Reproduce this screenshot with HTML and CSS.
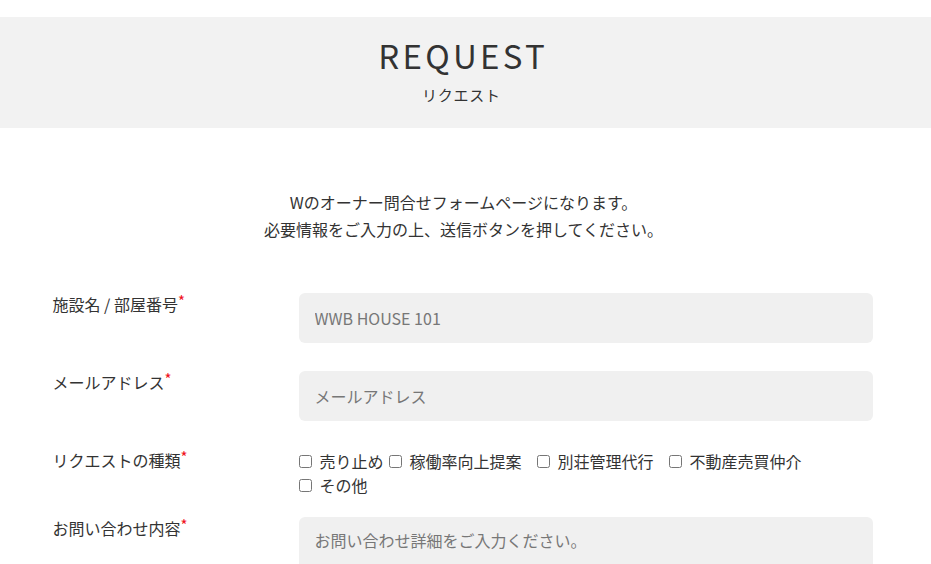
FILE: index.html
```html
<!DOCTYPE html>
<html lang="ja">
<head>
<meta charset="utf-8">
<title>REQUEST</title>
<link rel="stylesheet" href="styles.css">
</head>
<body>
<header class="hero">
  <h1 class="hero-title">REQUEST</h1>
  <p class="hero-sub">リクエスト</p>
</header>
<main class="content">
  <p class="intro">Wのオーナー問合せフォームページになります。<br>必要情報をご入力の上、送信ボタンを押してください。</p>
  <form class="form">
    <div class="row">
      <label class="label">施設名 / 部屋番号<span class="req">*</span></label>
      <input class="field" type="text" placeholder="WWB HOUSE 101">
    </div>
    <div class="row">
      <label class="label">メールアドレス<span class="req">*</span></label>
      <input class="field" type="text" placeholder="メールアドレス">
    </div>
    <div class="row row-check">
      <label class="label">リクエストの種類<span class="req">*</span></label>
      <div class="checks">
        <label class="check c1"><input type="checkbox"><span>売り止め</span></label>
        <label class="check c2"><input type="checkbox"><span>稼働率向上提案</span></label>
        <label class="check c3"><input type="checkbox"><span>別荘管理代行</span></label>
        <label class="check c4"><input type="checkbox"><span>不動産売買仲介</span></label>
        <label class="check c5"><input type="checkbox"><span>その他</span></label>
      </div>
    </div>
    <div class="row">
      <label class="label">お問い合わせ内容<span class="req">*</span></label>
      <textarea class="field area" placeholder="お問い合わせ詳細をご入力ください。"></textarea>
    </div>
  </form>
</main>
</body>
</html>
```
FILE: styles.css
```css
html, body {
  margin: 0;
  padding: 0;
  background: #fff;
}
body {
  font-family: "Noto Sans CJK JP", "Noto Sans", sans-serif;
  color: #333;
  padding-top: 17px;
}
.hero {
  background: #f2f2f2;
  height: 111px;
  box-sizing: border-box;
  text-align: center;
  padding-top: 16px;
  padding-right: 8px;
}
.hero-title {
  margin: 0;
  font-weight: 400;
  font-size: 33px;
  line-height: 44px;
  letter-spacing: 0.1em;
  padding-left: 0.1em;
  color: #333;
}
.hero-sub {
  margin: 8px 0 0;
  font-size: 15px;
  line-height: 20px;
  letter-spacing: 0.05em;
}
.content {
  width: 820px;
  margin: 0 auto;
  box-sizing: border-box;
  position: relative;
  left: -3px;
}
.intro {
  margin: 61px 0 0;
  text-align: center;
  font-size: 16px;
  line-height: 27px;
  padding-left: 2px;
}
.form {
  margin-top: 50px;
}
.row {
  display: grid;
  grid-template-columns: 246px 1fr;
  align-items: start;
  margin-bottom: 28px;
}
.label {
  font-size: 16px;
  line-height: 24px;
  margin-top: -1px;
}
.req {
  color: #f01020;
  font-size: 15px;
  vertical-align: top;
  position: relative;
  top: -3px;
}
.field {
  display: block;
  box-sizing: border-box;
  width: 574px;
  height: 50px;
  border: none;
  border-radius: 6px;
  background: #f0f0f0;
  padding: 0 16px;
  font-family: inherit;
  font-size: 16px;
  color: #333;
  outline: none;
}
.field::placeholder {
  color: #777;
}
.area {
  height: 120px;
  padding-top: 11px;
  resize: none;
}
.row-check {
  margin-bottom: 20px;
}
.checks {
  display: flex;
  flex-wrap: wrap;
  width: 574px;
  font-size: 16px;
  line-height: 24px;
}
.check {
  display: inline-flex;
  align-items: center;
}
.check input {
  margin: 0 8px 0 0;
  width: 13px;
  height: 13px;
}
.c1 { margin-right: 5px; }
.c2 { margin-right: 15px; }
.c3 { margin-right: 15px; }
.c4 { margin-right: 60px; }
```
